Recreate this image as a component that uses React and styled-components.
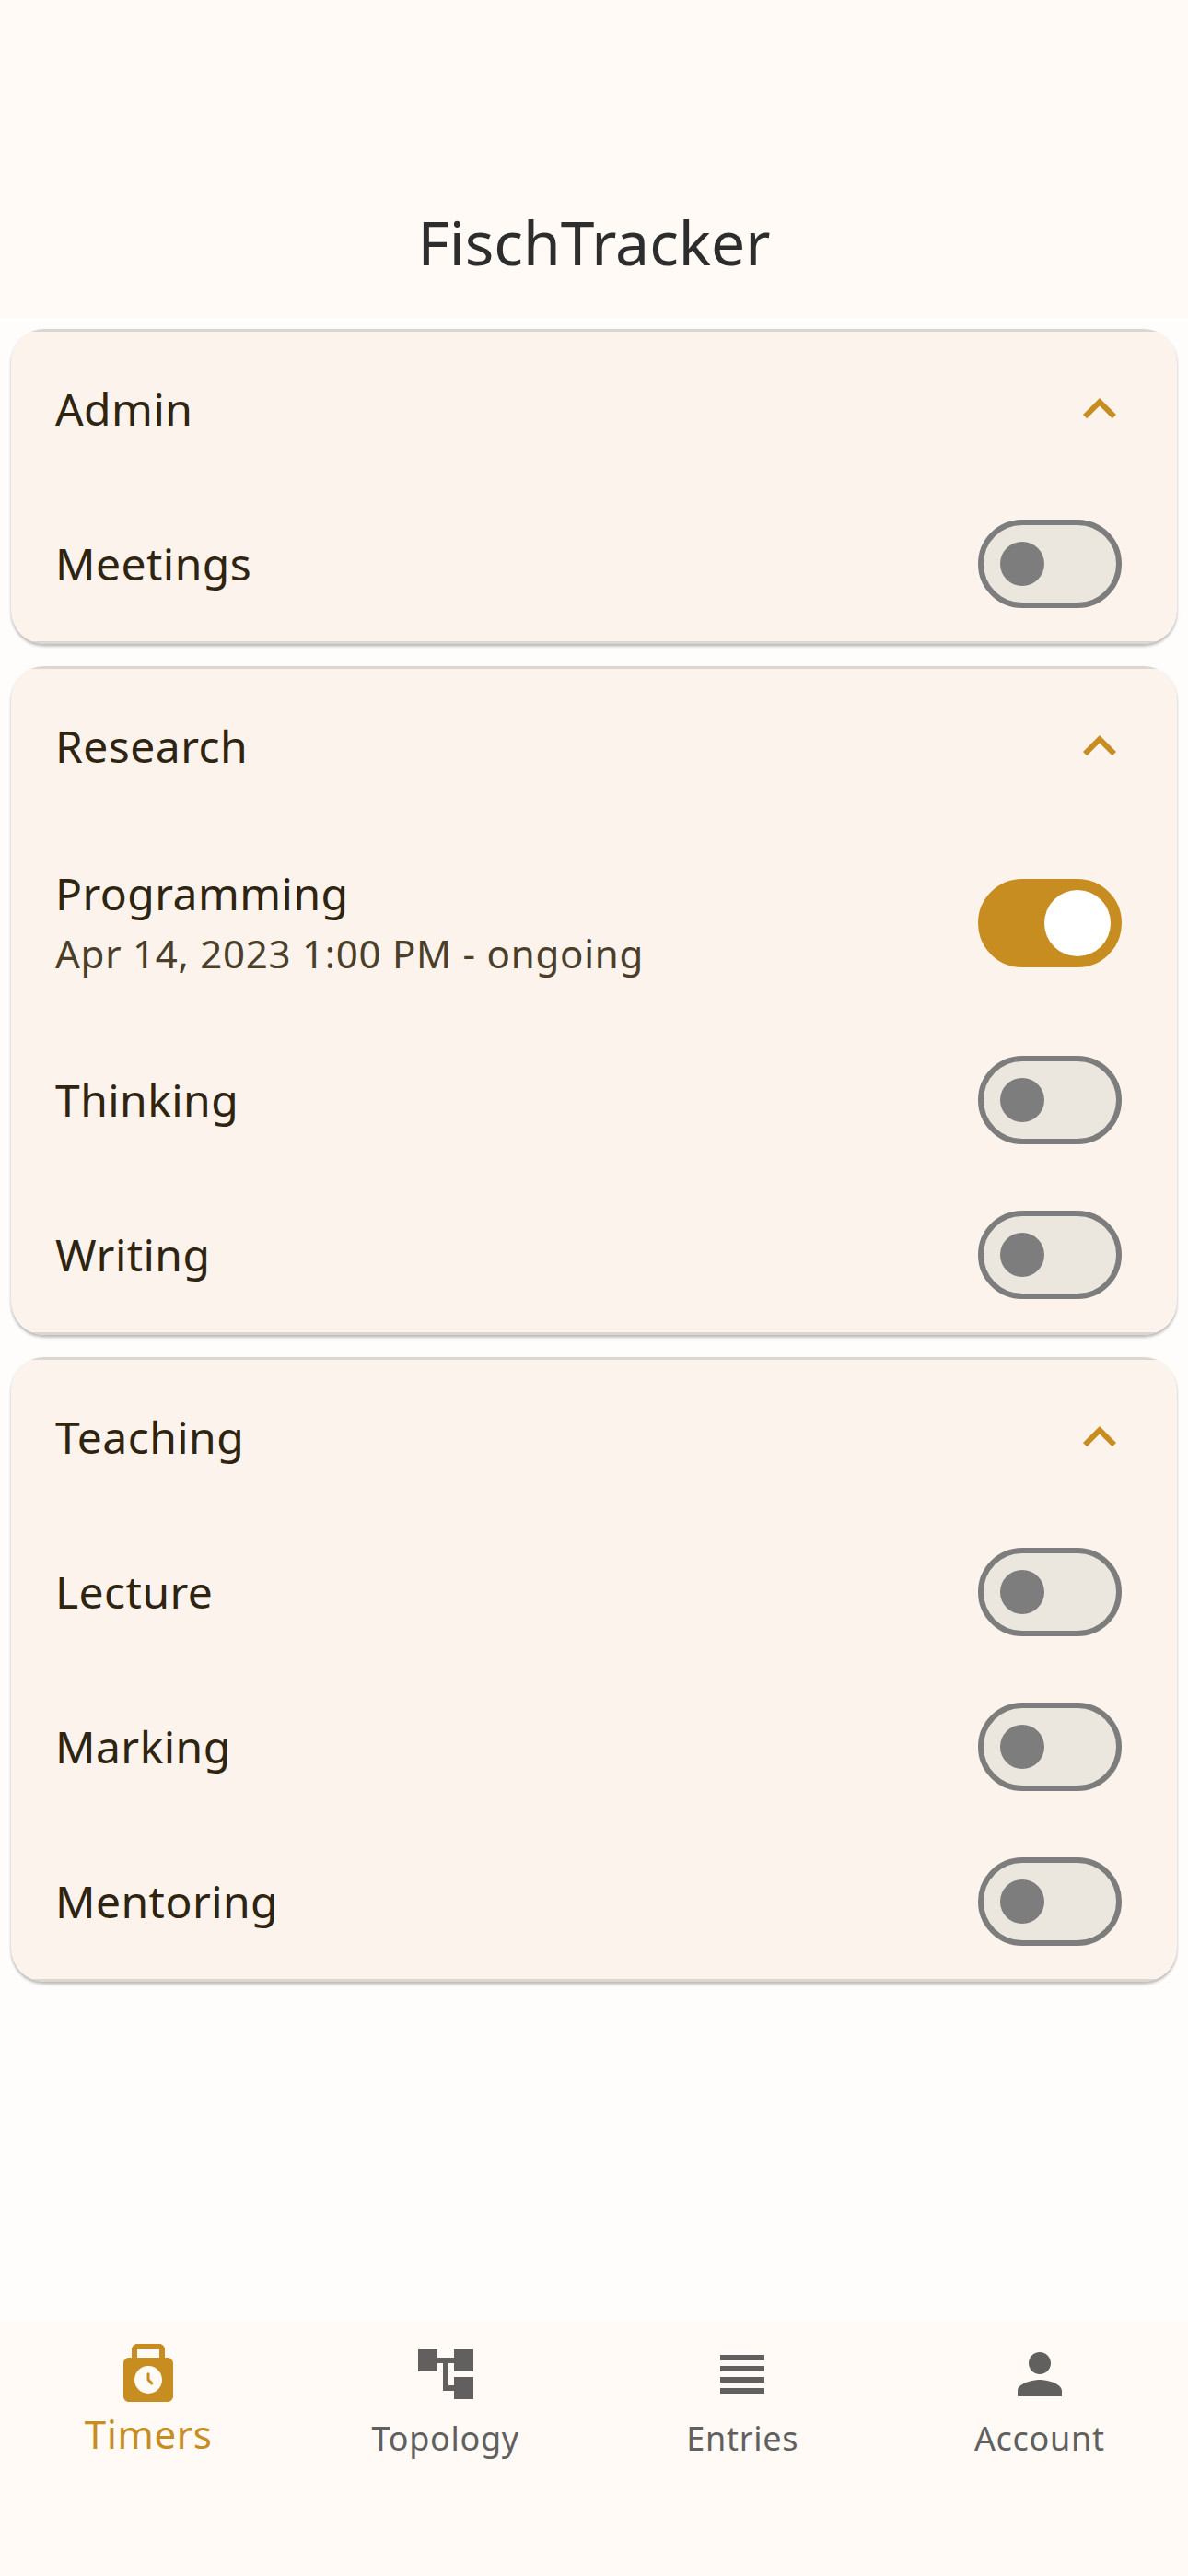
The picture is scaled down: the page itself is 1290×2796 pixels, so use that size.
import React, { useState } from "react";
import styled, { createGlobalStyle } from "styled-components";
import { MdAccountTree, MdExpandLess, MdPerson, MdViewHeadline } from "react-icons/md";

const GlobalStyle = createGlobalStyle`
  *, *::before, *::after { box-sizing: border-box; }
  body {
    margin: 0;
    background: #fefdfc;
    font-family: "Noto Sans", "Open Sans", sans-serif;
  }
`;

const Screen = styled.div`
  display: flex;
  flex-direction: column;
  width: 1290px;
  height: 2796px;
  background: #fefdfc;
  overflow: hidden;
`;

const AppBar = styled.header`
  display: flex;
  align-items: center;
  justify-content: center;
  height: 345px;
  padding-top: 178px;
  background: #fffaf6;
`;

const AppTitle = styled.h1`
  margin: 0;
  font-size: 66px;
  font-weight: 400;
  line-height: 84px;
  color: #2d2d2d;
`;

const Content = styled.main`
  flex: 1;
  display: flex;
  flex-direction: column;
  gap: 24px;
  padding: 12px;
`;

const Card = styled.section`
  border-radius: 36px;
  background: #fbf3ec;
  box-shadow: 0 3px 3px rgba(0, 0, 0, 0.2), 0 1px 3px rgba(0, 0, 0, 0.1);
  overflow: hidden;
`;

const Divider = styled.div`
  height: 3px;
  background: #dbd6cf;
`;

const Row = styled.div`
  display: flex;
  align-items: center;
  justify-content: space-between;
  height: ${({ $tall }) => ($tall ? 216 : 168)}px;
  padding: 0 48px;
`;

const RowText = styled.div`
  padding-bottom: ${({ $detailed }) => ($detailed ? 3 : 0)}px;
`;

const RowTitle = styled.div`
  font-size: 48px;
  line-height: 66px;
  letter-spacing: 0.45px;
  color: #2f2410;
`;

const RowSubtitle = styled.div`
  margin-top: 2px;
  font-size: 42px;
  line-height: 60px;
  letter-spacing: 0.75px;
  color: #4b3f2a;
`;

const Chevron = styled(MdExpandLess)`
  width: 72px;
  height: 72px;
  color: #c78d20;
`;

const Track = styled.button`
  display: flex;
  align-items: center;
  justify-content: ${({ $on }) => ($on ? "flex-end" : "flex-start")};
  width: 156px;
  height: 96px;
  margin: 0 12px 0 0;
  padding: 0 ${({ $on }) => ($on ? 6 : 18)}px;
  border: 6px solid ${({ $on }) => ($on ? "#c78d20" : "#7d7d7d")};
  border-radius: 48px;
  background: ${({ $on }) => ($on ? "#c78d20" : "#ebe6de")};
`;

const Thumb = styled.span`
  width: ${({ $on }) => ($on ? 72 : 48)}px;
  height: ${({ $on }) => ($on ? 72 : 48)}px;
  border-radius: 50%;
  background: ${({ $on }) => ($on ? "#ffffff" : "#7d7d7d")};
`;

const NavBar = styled.nav`
  display: grid;
  grid-template-columns: repeat(4, 1fr);
  height: 276px;
  padding-top: 21px;
  background: #fffaf6;
`;

const NavItem = styled.div`
  display: flex;
  flex-direction: column;
  align-items: center;
  color: ${({ $active }) => ($active ? "#c78d20" : "#61605e")};

  svg {
    width: 72px;
    height: 72px;
  }
`;

const NavLabel = styled.span`
  margin-top: ${({ $active }) => ($active ? 0 : 5)}px;
  font-size: ${({ $active }) => ($active ? 42 : 36)}px;
  line-height: 58px;
  letter-spacing: 0.7px;
`;

function PunchClock() {
  return (
    <svg viewBox="0 0 24 24" fill="currentColor" aria-hidden="true">
      <path
        fillRule="evenodd"
        d="M19 6h-1V3c0-1.1-.9-2-2-2H8c-1.1 0-2 .9-2 2v3H5c-1.1 0-2 .9-2 2v12c0 1.1.9 2 2 2h14c1.1 0 2-.9 2-2V8c0-1.1-.9-2-2-2zM8 3h8v3H8V3zm4 16a5 5 0 1 1 0-10 5 5 0 0 1 0 10z"
      />
      <path
        d="M12 11.9V14l1.25 1.3"
        fill="none"
        stroke="currentColor"
        strokeWidth="1"
        strokeLinecap="round"
      />
    </svg>
  );
}

const groups = [
  { name: "Admin", timers: [{ name: "Meetings" }] },
  {
    name: "Research",
    timers: [
      { name: "Programming", detail: "Apr 14, 2023 1:00 PM - ongoing" },
      { name: "Thinking" },
      { name: "Writing" },
    ],
  },
  {
    name: "Teaching",
    timers: [{ name: "Lecture" }, { name: "Marking" }, { name: "Mentoring" }],
  },
];

const tabs = [
  { label: "Timers", Icon: PunchClock },
  { label: "Topology", Icon: MdAccountTree },
  { label: "Entries", Icon: MdViewHeadline },
  { label: "Account", Icon: MdPerson },
];

function TimerRow({ name, detail }) {
  const [on, setOn] = useState(Boolean(detail));
  return (
    <Row $tall={Boolean(detail)}>
      <RowText $detailed={Boolean(detail)}>
        <RowTitle>{name}</RowTitle>
        {detail && <RowSubtitle>{detail}</RowSubtitle>}
      </RowText>
      <Track
        type="button"
        role="switch"
        aria-checked={on}
        aria-label={name}
        $on={on}
        onClick={() => setOn(!on)}
      >
        <Thumb $on={on} />
      </Track>
    </Row>
  );
}

export default function App() {
  return (
    <Screen>
      <GlobalStyle />
      <AppBar>
        <AppTitle>FischTracker</AppTitle>
      </AppBar>
      <Content>
        {groups.map((group) => (
          <Card key={group.name}>
            <Divider />
            <Row>
              <RowTitle>{group.name}</RowTitle>
              <Chevron />
            </Row>
            {group.timers.map((timer) => (
              <TimerRow key={timer.name} {...timer} />
            ))}
            <Divider />
          </Card>
        ))}
      </Content>
      <NavBar>
        {tabs.map(({ label, Icon }, index) => (
          <NavItem key={label} $active={index === 0}>
            <Icon />
            <NavLabel $active={index === 0}>{label}</NavLabel>
          </NavItem>
        ))}
      </NavBar>
    </Screen>
  );
}
